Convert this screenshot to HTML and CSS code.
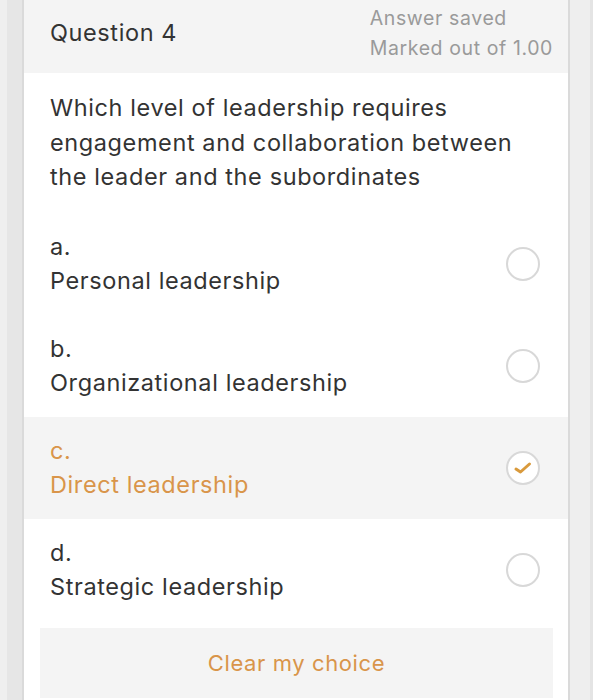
FILE: index.html
```html
<!DOCTYPE html>
<html lang="en">
<head>
    <meta charset="UTF-8">
    <meta name="viewport" content="width=device-width, initial-scale=1.0">
    <title>Question 4</title>
    <link rel="stylesheet" href="styles.css">
</head>
<body>

    <div class="frame">

        <!-- Question header -->
        <div class="qheader">
            <h2 class="qno">Question 4</h2>
            <div class="qinfo">
                <div>Answer saved</div>
                <div>Marked out of 1.00</div>
            </div>
        </div>

        <p class="qtext">Which level of leadership requires engagement and collaboration between the leader and the subordinates</p>

        <!-- Answer options -->
        <div class="answers">
            <label class="option">
                <span class="opt-text">
                    <span class="letter">a.</span>
                    <span class="answer">Personal leadership</span>
                </span>
                <span class="radio"></span>
            </label>
            <label class="option">
                <span class="opt-text">
                    <span class="letter">b.</span>
                    <span class="answer">Organizational leadership</span>
                </span>
                <span class="radio"></span>
            </label>
            <label class="option selected">
                <span class="opt-text">
                    <span class="letter">c.</span>
                    <span class="answer">Direct leadership</span>
                </span>
                <span class="radio">
                    <svg width="20" height="16" viewBox="0 0 20 16">
                        <path d="M3 9 L7.5 12 L16.5 4" fill="none" stroke="#d99a3c" stroke-width="3" stroke-linecap="round" stroke-linejoin="round"/>
                    </svg>
                </span>
            </label>
            <label class="option">
                <span class="opt-text">
                    <span class="letter">d.</span>
                    <span class="answer">Strategic leadership</span>
                </span>
                <span class="radio"></span>
            </label>
        </div>

        <button class="clear-btn">Clear my choice</button>

    </div>

</body>
</html>
```

FILE: styles.css
```css
body {
    margin: 0;
    font-family: Inter, "Liberation Sans", Arial, sans-serif;
    letter-spacing: 0.6px;
    background: linear-gradient(to right, #efefef 0, #efefef 7px, #e6e6e6 7px, #e6e6e6 570px, #eeeeee 570px, #eeeeee 590px, #e4e4e4 590px);
    color: #333;
}
.frame {
    margin: 0 23px 0 22px;
    border-left: 2px solid #dadada;
    border-right: 2px solid #dadada;
    background: #fff;
    height: 700px;
    overflow: hidden;
}
.qheader {
    display: flex;
    justify-content: space-between;
    align-items: center;
    height: 73px;
    padding: 0 15px 0 26px;
    background: #f4f4f4;
}
.qno {
    margin: -8px 0 0 0;
    font-size: 23.5px;
    font-weight: normal;
    color: #333;
}
.qinfo {
    align-self: flex-start;
    padding-top: 3px;
    font-size: 19.5px;
    line-height: 30px;
    color: #9a9a9a;
}
.qtext {
    margin: 0;
    padding: 18px 30px 0 26px;
    font-size: 23.5px;
    line-height: 34.5px;
    color: #333;
}
.answers {
    margin-top: 18px;
}
.option {
    display: flex;
    align-items: center;
    justify-content: space-between;
    padding: 17px 28px 17px 26px;
    font-size: 23.5px;
    line-height: 34px;
}
.opt-text {
    display: flex;
    flex-direction: column;
}
.selected {
    background: #f4f4f4;
    color: #d9954a;
}
.radio {
    display: flex;
    align-items: center;
    justify-content: center;
    width: 30px;
    height: 30px;
    border: 2px solid #d8d8d8;
    border-radius: 50%;
    background: #fff;
}
.clear-btn {
    display: block;
    width: 513px;
    height: 70px;
    margin: 7px 0 0 16px;
    border: none;
    background: #f4f4f4;
    font-family: inherit;
    font-size: 22px;
    letter-spacing: 0.6px;
    color: #d9954a;
    cursor: pointer;
}
```
